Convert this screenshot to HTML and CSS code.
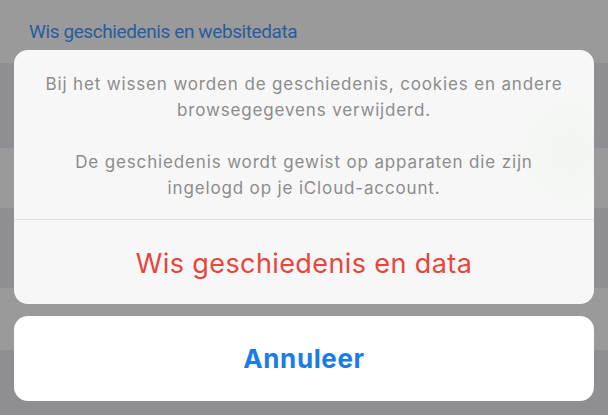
FILE: index.html
```html
<!DOCTYPE html>
<html lang="nl">
<head>
  <meta charset="UTF-8" />
  <title>Wis geschiedenis</title>
  <link rel="stylesheet" href="styles.css">
</head>
<body>
  <div class="screen">
    <div class="rows" aria-hidden="true">
      <div class="row row-light row-head"><span class="row-title">Wis geschiedenis en websitedata</span></div>
      <div class="row row-dark" style="height:85px"></div>
      <div class="row row-light" style="height:60px"></div>
      <div class="row row-dark" style="height:80px"></div>
      <div class="row row-light" style="height:62px"></div>
      <div class="row row-dark row-fill"></div>
    </div>

    <div class="sheet" role="dialog" aria-label="Wis geschiedenis">
      <div class="sheet-group">
        <div class="sheet-msg">
          <p>Bij het wissen worden de geschiedenis, cookies en andere<br>browsegegevens verwijderd.</p>
          <p>De geschiedenis wordt gewist op apparaten die zijn<br>ingelogd op je iCloud-account.</p>
        </div>
        <button class="sheet-btn destructive">Wis geschiedenis en data</button>
      </div>
      <div class="sheet-group cancel-group">
        <button class="sheet-btn cancel">Annuleer</button>
      </div>
    </div>
  </div>
</body>
</html>
```

FILE: styles.css
```css
*, *::before, *::after { box-sizing: border-box; }
html, body {
  margin: 0;
  height: 100%;
}
body {
  font-family: Inter, Roboto, 'Noto Sans', sans-serif;
  background: #8f8f94;
  overflow: hidden;
}
.screen {
  position: relative;
  width: 608px;
  height: 415px;
}
.rows {
  display: flex;
  flex-direction: column;
  height: 100%;
}
.row-light { background: #9a9a9a; }
.row-dark { background: #8e8e93; }
.row-head {
  height: 63px;
  padding: 20px 0 0 29px;
}
.row-fill { flex: 1; }
.row-title {
  font-family: Roboto, Inter, sans-serif;
  color: #2a5b9b;
  font-size: 19px;
  letter-spacing: -0.4px;
}

/* action sheet over the list */
.sheet {
  position: absolute;
  left: 14px;
  top: 50px;
  width: 580px;
  display: flex;
  flex-direction: column;
  gap: 12px;
}
.sheet-group {
  background: radial-gradient(circle at 96% 40%, #f1f6f1 0, #f7f7f7 70px) #f7f7f7;
  border-radius: 14px;
  overflow: hidden;
  display: flex;
  flex-direction: column;
}
.cancel-group { background: #fff; }
.sheet-msg {
  height: 170px;
  padding: 21px 0 0;
  text-align: center;
  color: #8c8c8c;
  font-size: 17px;
  letter-spacing: 0.85px;
  line-height: 26px;
  border-bottom: 1px solid #e2e2e2;
}
.sheet-msg p {
  margin: 0 0 26px;
}
.sheet-btn {
  border: none;
  background: none;
  font-family: inherit;
  font-size: 27px;
  letter-spacing: 0.4px;
  height: 84px;
  padding: 0;
  cursor: pointer;
}
.destructive {
  color: #e8453c;
  padding-top: 2px;
}
.cancel {
  height: 85px;
  font-size: 26px;
  color: #1a7ce6;
  font-weight: 700;
  letter-spacing: 0.6px;
}
```
